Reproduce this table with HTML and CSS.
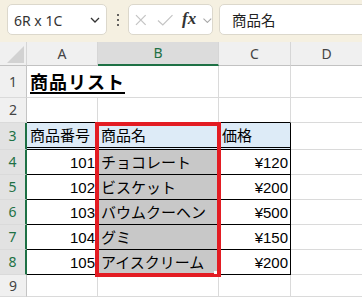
FILE: index.html
```html
<!DOCTYPE html>
<html lang="ja">
<head>
<meta charset="utf-8">
<link rel="stylesheet" href="styles.css">
</head>
<body>
<div class="toolbar">
  <div class="namebox">
    <span class="nb-text">6R x 1C</span>
    <svg class="nb-chev" width="10" height="6" viewBox="0 0 10 6"><path d="M1 1l4 4 4-4" fill="none" stroke="#333" stroke-width="1.3"/></svg>
  </div>
  <div class="dots"><i></i><i></i><i></i></div>
  <div class="fbox">
    <svg class="ic-x" width="12" height="12" viewBox="0 0 12 12"><path d="M1 1l10 10M11 1L1 11" fill="none" stroke="#c4c4c4" stroke-width="1.3"/></svg>
    <svg class="ic-ok" width="17" height="12" viewBox="0 0 17 12"><path d="M1 6.5l5 4.5 10-10" fill="none" stroke="#c4c4c4" stroke-width="1.3"/></svg>
    <span class="fx">fx</span>
    <svg class="ic-chev" width="9" height="5" viewBox="0 0 9 5"><path d="M0.5 0.5l4 4 4-4" fill="none" stroke="#a8a8a8" stroke-width="1.1"/></svg>
  </div>
  <div class="formula">商品名</div>
</div>
<div class="sheet">
  <div class="grid">
    <div class="ch corner"></div>
    <div class="ch">A</div>
    <div class="ch ch-sel">B</div>
    <div class="ch">C</div>
    <div class="ch">D</div>

    <div class="rh">1</div>
    <div class="c c-title"><span class="title">商品リスト</span></div>
    <div class="c"></div>
    <div class="c"></div>
    <div class="c"></div>

    <div class="rh">2</div>
    <div class="c tb"></div>
    <div class="c tb"></div>
    <div class="c tb"></div>
    <div class="c"></div>

    <div class="rh rh-sel">3</div>
    <div class="c t thd">商品番号</div>
    <div class="c t thd">商品名</div>
    <div class="c t thd">価格</div>
    <div class="c"></div>

    <div class="rh rh-sel">4</div>
    <div class="c t num">101</div>
    <div class="c t sel">チョコレート</div>
    <div class="c t num">¥120</div>
    <div class="c"></div>

    <div class="rh rh-sel">5</div>
    <div class="c t num">102</div>
    <div class="c t sel">ビスケット</div>
    <div class="c t num">¥200</div>
    <div class="c"></div>

    <div class="rh rh-sel">6</div>
    <div class="c t num">103</div>
    <div class="c t sel">バウムクーヘン</div>
    <div class="c t num">¥500</div>
    <div class="c"></div>

    <div class="rh rh-sel">7</div>
    <div class="c t num">104</div>
    <div class="c t sel">グミ</div>
    <div class="c t num">¥150</div>
    <div class="c"></div>

    <div class="rh rh-sel">8</div>
    <div class="c t num">105</div>
    <div class="c t sel">アイスクリーム</div>
    <div class="c t num">¥200</div>
    <div class="c"></div>

    <div class="rh">9</div>
    <div class="c"></div>
    <div class="c"></div>
    <div class="c"></div>
    <div class="c"></div>
  </div>
  <div class="outline"></div>
  <div class="handle"></div>
</div>
</body>
</html>
```

FILE: styles.css
```css
html, body {
  margin: 0;
  padding: 0;
  background: #fff;
}
body {
  width: 362px;
  height: 297px;
  overflow: hidden;
  font-family: "Liberation Sans", "Noto Sans CJK JP", sans-serif;
  color: #000;
}

/* ---------- toolbar ---------- */
.toolbar {
  height: 42px;
  box-sizing: border-box;
  background: #f5f0e1;
  display: flex;
  align-items: flex-start;
  padding: 4px 0 0 7px;
}
.namebox,
.fbox,
.formula {
  height: 31px;
  box-sizing: border-box;
  background: #fff;
  border: 1px solid #dcd8cc;
  border-radius: 5px;
  display: flex;
  align-items: center;
}
.namebox {
  width: 100px;
  padding: 2px 0 0 6px;
}
.nb-text {
  font-family: "Noto Sans", "Liberation Sans", sans-serif;
  font-size: 14px;
  line-height: 16px;
  color: #333;
  flex: 1;
}
.nb-chev {
  margin: 0 6px 0 0;
  position: relative;
  top: -1px;
}
.dots {
  width: 21px;
  height: 31px;
  display: flex;
  flex-direction: column;
  align-items: center;
  justify-content: center;
  gap: 3px;
}
.dots i {
  display: block;
  width: 2px;
  height: 2px;
  background: #333;
  border-radius: 1px;
}
.fbox {
  width: 85px;
  padding-left: 6px;
}
.ic-x { margin-right: 10px; }
.ic-ok { margin-right: 9px; }
.fx {
  font-family: "Liberation Serif", serif;
  font-style: italic;
  font-weight: bold;
  font-size: 17px;
  line-height: 18px;
  color: #333;
  margin-right: 7px;
  position: relative;
  top: -1px;
}
.ic-chev { position: relative; top: 1px; }
.formula {
  flex: 1;
  margin: 0 -10px 0 6px;
  padding-left: 12px;
  font-family: "Noto Sans CJK JP", sans-serif;
  font-size: 14.5px;
  line-height: 18px;
  color: #222;
}

/* ---------- sheet ---------- */
.sheet {
  position: relative;
}
.grid {
  display: grid;
  grid-template-columns: 27px 71px 121px 72px 72px;
  grid-template-rows: 24px 32px 25px 27px repeat(5, 25px) 22px;
}
.grid > div {
  box-sizing: border-box;
  min-width: 0;
  display: flex;
  align-items: center;
  white-space: nowrap;
}
.ch {
  background: #f0f0f0;
  border-right: 1px solid #d6d6d6;
  border-bottom: 1px solid #c2c2c2;
  justify-content: center;
  font-family: "Noto Sans", "Liberation Sans", sans-serif;
  font-size: 14px;
  line-height: 16px;
  color: #444;
}
.ch-sel {
  background: #dcdcdc;
  color: #1e7145;
  border-bottom: 2px solid #1e7145;
}
.corner {
  position: relative;
}
.corner::after {
  content: "";
  position: absolute;
  left: 7px;
  top: 4px;
  width: 17px;
  height: 17px;
  background: #d2d2d2;
  clip-path: polygon(100% 0, 100% 100%, 0 100%);
}
.rh {
  background: #f0f0f0;
  border-right: 1px solid #c4c4c4;
  border-bottom: 1px solid #dadada;
  justify-content: center;
  font-family: "Noto Sans", "Liberation Sans", sans-serif;
  font-size: 14px;
  line-height: 16px;
  color: #444;
}
.rh-sel {
  background: #e2e2e2;
  color: #1e7145;
  border-right: 2px solid #1e7145;
}
.c {
  border-right: 1px solid #dadada;
  border-bottom: 1px solid #dadada;
  padding: 0 2px 0 3px;
  font-size: 15px;
  line-height: 17px;
}
.c-title {
  border-right: none;
  overflow: visible;
  position: relative;
  z-index: 1;
}
.title {
  font-family: "Noto Sans CJK JP", sans-serif;
  font-weight: bold;
  font-size: 18px;
  letter-spacing: 1px;
  line-height: 20px;
  text-decoration: underline;
  text-decoration-thickness: 2px;
  text-underline-offset: 3px;
  position: relative;
  top: -1px;
}
.tb {
  border-bottom-color: #000;
}
.t {
  border-right-color: #000;
  border-bottom-color: #000;
}
.thd {
  background: #ddebf7;
  border-bottom: 3px double #000;
}
.num {
  justify-content: flex-end;
}
.sel {
  background: #c8c8c8;
}

.outline {
  position: absolute;
  left: 95px;
  top: 80px;
  width: 126px;
  height: 155px;
  box-sizing: border-box;
  border: 4px solid #e31c23;
  pointer-events: none;
}
.handle {
  position: absolute;
  left: 214px;
  top: 229px;
  width: 3px;
  height: 3px;
  background: #fff;
}
```
